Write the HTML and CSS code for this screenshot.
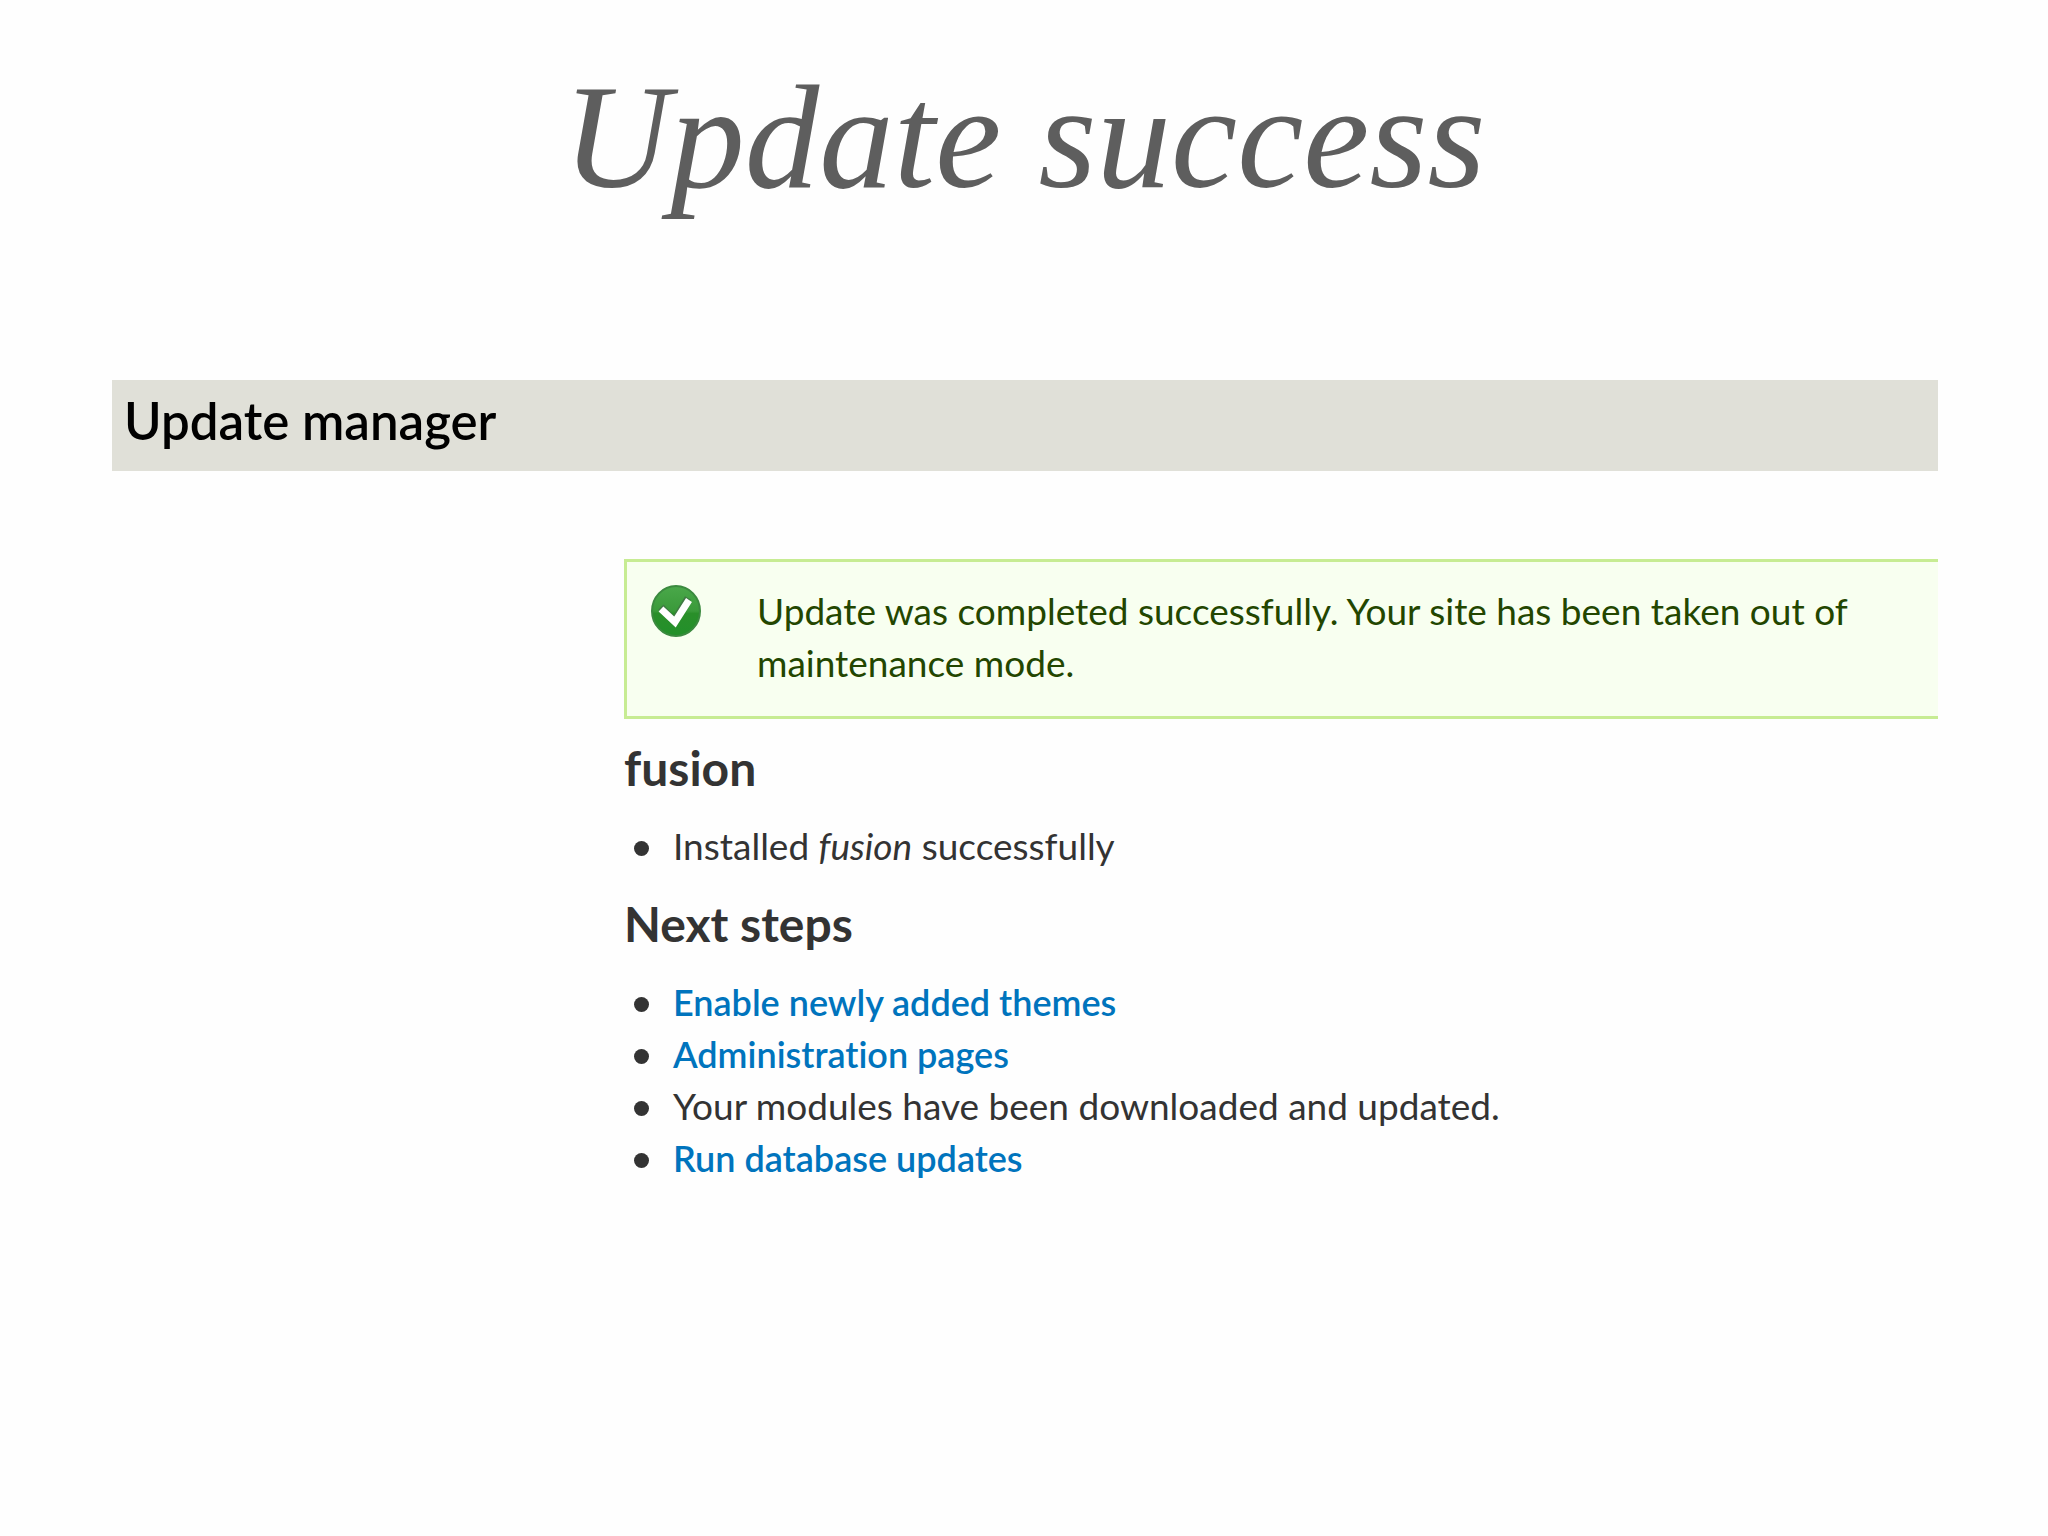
FILE: index.html
```html
<!DOCTYPE html>
<html lang="en">
<head>
<meta charset="utf-8">
<title>Update success</title>
<link rel="stylesheet" href="styles.css">
</head>
<body>
<h1 class="slide-title">Update success</h1>
<div id="page">
  <div id="branding">
    <h2 class="page-title">Update manager</h2>
  </div>
  <div id="content">
    <div class="messages">
      <svg class="ok" viewBox="0 0 52 54">
        <defs>
          <linearGradient id="green" x1="0" y1="0" x2="0" y2="1">
            <stop offset="0" stop-color="#4aa84a"/>
            <stop offset="0.5" stop-color="#3a9a3a"/>
            <stop offset="0.55" stop-color="#2a8f2a"/>
            <stop offset="1" stop-color="#22902a"/>
          </linearGradient>
        </defs>
        <ellipse cx="25" cy="26" rx="24" ry="25" fill="url(#green)" stroke="#3b8a3f" stroke-width="2"/>
        <path d="M10 22L23 36L37 13" fill="none" stroke="#3f7a43" stroke-width="7"/>
        <path d="M10 24L24 37L38 15" fill="none" stroke="#fff" stroke-width="7"/>
      </svg>
      <p>Update was completed successfully. Your site has been taken out of maintenance mode.</p>
    </div>
    <h3>fusion</h3>
    <ul>
      <li>Installed <em>fusion</em> successfully</li>
    </ul>
    <h3>Next steps</h3>
    <ul>
      <li><a href="#">Enable newly added themes</a></li>
      <li><a href="#">Administration pages</a></li>
      <li>Your modules have been downloaded and updated.</li>
      <li><a href="#">Run database updates</a></li>
    </ul>
  </div>
</div>
</body>
</html>
```
FILE: styles.css
```css
body {
	margin:0;
	background-color:#fefefe;
	color:#333;
	font-family:Lato, "Noto Sans", sans-serif;
	font-size:37px;
	font-variant-ligatures:none;
	line-height:52px;
}
h1, h2, h3, p, ul {
	margin:0;
	padding:0;
}
.slide-title {
	padding:47px 0 153px;
	color:#5e5e5e;
	font-family:"Liberation Serif", Georgia, serif;
	font-size:149px;
	font-style:italic;
	font-weight:normal;
	line-height:180px;
	text-align:center;
}
#page {
	margin:0 110px 0 112px;
}
#branding {
	padding:11px 12px 20px;
	background-color:#e0e0d8;
}
.page-title {
	color:#000;
	font-size:51px;
	font-weight:600;
	line-height:60px;
}
#content {
	margin:88px 0 0 512px;
}
.messages {
	display:flex;
	gap:54px;
	padding:23px 80px 27px 24px;
	border:3px solid #c7ec93;
	border-right:none;
	background-color:#f8fff0;
	color:#234600;
}
.messages .ok {
	flex:none;
	width:52px;
	height:54px;
}
#content h3 {
	margin:23px 0 26px;
	font-size:48px;
	font-weight:bold;
}
#content ul {
	margin-bottom:26px;
	list-style:none;
}
#content li {
	display:flex;
	align-items:center;
	white-space:pre;
}
#content li::before {
	content:"";
	width:15px;
	height:15px;
	margin:4px 24px 0 10px;
	border-radius:50%;
	background-color:#333;
}
#content a {
	color:#0074bd;
	font-size:36px;
	font-weight:600;
	text-decoration:none;
}
```
